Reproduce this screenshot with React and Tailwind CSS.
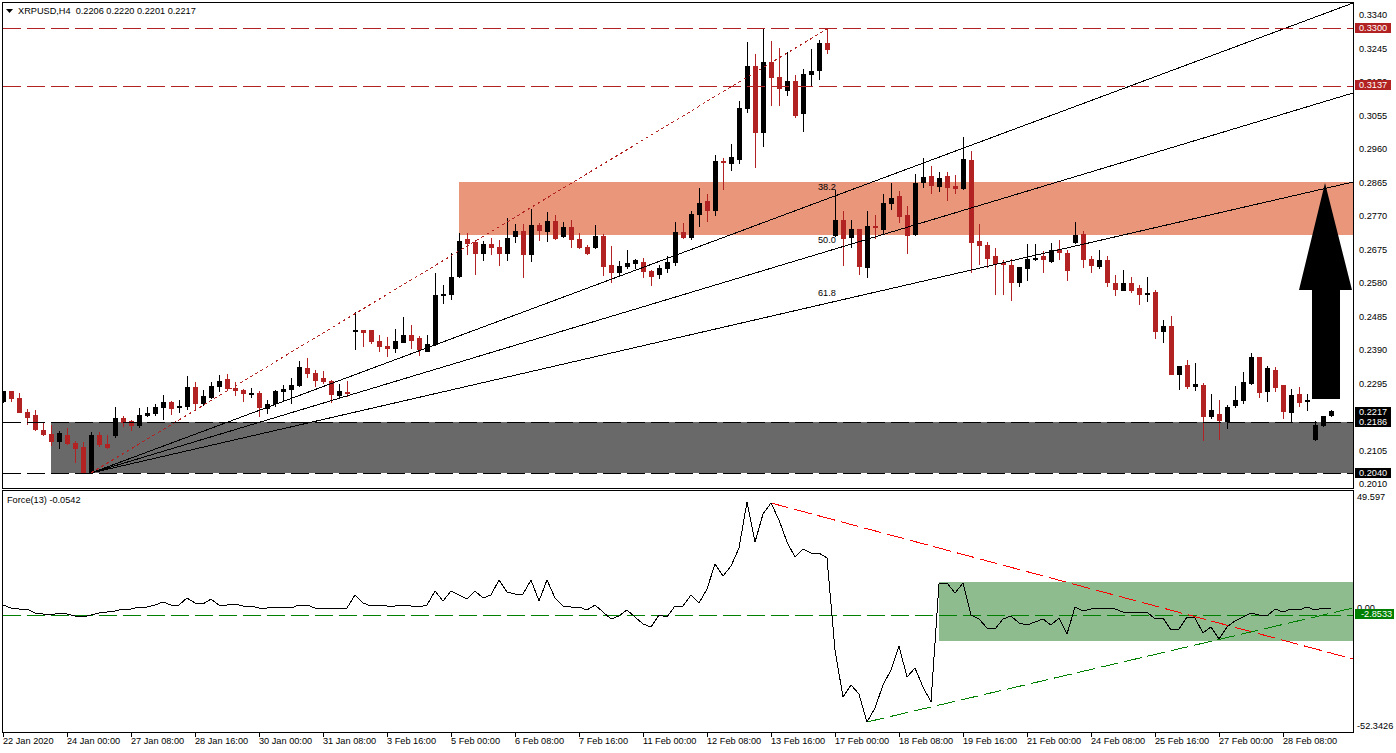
const RED = "#b22222";

// candle: colour, body top, body bottom, high, low (all in page pixels); x = 3 + 8 * index
const candles = [
  ["k",391,402,391,403],["r",391,399,391,402],["r",398,413,393,413],["r",412,418,409,425],["r",415,430,410,431],
  ["r",430,435,422,436],["r",434,442,425,446],["k",433,442,431,449],["r",435,444,428,445],["r",443,449,441,463],
  ["r",447,473,442,473],["k",435,473,432,473],["r",435,445,432,447],["r",444,448,435,449],["k",418,436,407,438],
  ["r",418,423,416,427],["r",421,426,420,431],["k",415,426,408,428],["k",413,416,407,417],["k",407,414,404,416],
  ["k",402,408,395,420],["r",402,409,401,415],["k",406,408,400,413],["k",387,407,376,410],["r",387,404,382,411],
  ["k",396,404,390,406],["k",386,398,382,399],["k",381,387,375,392],["r",379,389,374,391],["r",388,391,382,396],
  ["r",390,394,389,402],["k",393,394,388,398],["r",393,408,391,417],["k",404,409,400,414],["k",391,404,390,407],
  ["k",389,392,385,402],["k",385,390,378,404],["k",367,386,361,387],["r",368,374,358,378],["r",373,381,370,387],
  ["r",378,382,371,384],["r",381,395,380,403],["k",391,396,384,398],["r",392,393,381,397],["k",330,332,312,350],
  ["r",330,333,330,347],["r",330,342,330,344],["r",341,347,335,352],["r",346,349,337,357],["k",341,349,329,353],
  ["k",335,343,317,343],["r",335,341,325,349],["r",338,350,336,356],["k",344,352,335,352],["k",295,345,273,346],
  ["k",294,296,285,304],["k",277,295,253,300],["k",241,277,233,278],["r",239,244,233,255],["r",242,254,240,275],
  ["k",244,254,241,261],["r",244,248,238,255],["r",247,254,240,266],["k",238,254,218,261],["k",231,237,224,243],
  ["r",231,255,224,278],["k",225,255,209,262],["r",225,231,223,241],["k",221,232,212,242],["r",221,239,215,240],
  ["k",227,237,222,238],["r",227,240,220,248],["r",239,248,233,249],["r",247,254,245,255],["k",236,248,225,249],
  ["r",236,267,234,276],["r",265,273,246,283],["k",266,273,261,277],["k",263,267,250,269],["k",260,264,259,269],
  ["r",262,272,258,278],["r",271,277,270,286],["k",268,275,265,279],["k",262,269,256,273],["k",232,263,222,266],
  ["r",232,238,223,239],["k",214,238,211,240],["k",203,215,188,227],["r",201,211,194,222],["k",161,211,155,216],
  ["r",161,163,158,190],["k",157,164,144,171],["k",108,160,101,164],["k",66,109,42,113],["r",66,133,54,168],
  ["k",62,133,29,147],["r",62,78,41,106],["r",77,89,48,106],["k",81,91,52,96],["r",81,116,75,118],
  ["k",74,114,69,132],["k",71,75,49,87],["k",43,71,40,80],["r",43,50,29,54],["k",220,236,190,237],
  ["r",220,239,211,266],["k",229,238,220,248],["r",229,267,229,275],["k",226,268,211,278],["r",226,228,215,239],
  ["k",203,230,194,235],["k",198,204,183,210],["r",196,217,191,223],["r",215,236,206,254],["k",183,235,174,236],
  ["k",177,183,158,188],["r",176,186,166,194],["k",178,187,172,192],["r",176,188,172,201],["r",186,189,175,194],
  ["k",159,189,137,190],["r",160,243,151,273],["r",241,246,224,265],["r",245,259,242,268],["r",256,264,248,295],
  ["r",263,265,260,295],["r",265,283,259,301],["k",267,283,267,287],["k",259,269,244,281],["k",258,260,244,261],
  ["r",256,260,251,273],["k",250,262,243,263],["r",249,253,240,260],["r",253,271,250,281],["k",235,243,222,244],
  ["r",234,260,231,268],["r",259,266,256,273],["k",260,267,250,269],["r",260,283,256,287],["r",283,290,275,296],
  ["k",283,291,270,291],["r",283,291,277,293],["r",288,295,285,305],["k",293,295,277,302],["r",292,332,290,339],
  ["k",326,332,320,343],["r",326,375,316,375],["k",366,375,366,390],["r",365,387,360,389],["k",384,387,363,391],
  ["r",385,417,383,441],["k",410,417,394,419],["r",414,421,400,440],["k",407,422,405,429],["k",400,406,386,408],
  ["k",382,401,372,404],["k",357,384,353,385],["r",357,393,357,398],["k",368,392,366,402],["r",370,388,367,392],
  ["r",385,412,385,419],["k",395,413,389,422],["r",394,403,387,407],["k",400,402,394,411],["k",425,440,421,441],
  ["k",416,426,416,427],["k",411,416,410,417],
];

const force = [
  605,608,609,609,613,614,615,613,614,616,617,615,613,612,611,609,609,607,607,605,602,605,605,598,603,604,599,605,
  605,604,606,606,608,608,607,607,608,605,605,608,608,609,608,608,595,603,606,605,606,606,605,606,607,605,591,601,
  591,595,599,591,598,595,580,592,594,594,580,601,580,598,606,607,607,610,605,612,619,616,610,617,624,627,615,617,
  606,606,595,603,589,564,576,566,548,502,542,514,503,520,542,557,549,553,553,558,650,697,685,694,722,708,685,670,
  646,677,668,687,702,584,583,593,583,615,619,628,629,619,616,623,625,622,619,625,618,634,607,611,609,608,608,609,
  612,612,612,612,619,618,630,629,617,618,633,627,639,627,621,617,613,615,616,609,612,609,610,607,610,608,608,
];

// the 0.2200 row sits under the tags, so it stays empty
const prices = ["0.3340","0.3245","0.3150","0.3055","0.2960","0.2865","0.2770","0.2675","0.2580","0.2485","0.2390","0.2295","","0.2105","0.2010"];

const times = [
  "22 Jan 2020","24 Jan 00:00","27 Jan 08:00","28 Jan 16:00","30 Jan 00:00","31 Jan 08:00","3 Feb 16:00",
  "5 Feb 00:00","6 Feb 08:00","7 Feb 16:00","11 Feb 00:00","12 Feb 08:00","13 Feb 16:00","17 Feb 00:00",
  "18 Feb 08:00","19 Feb 16:00","21 Feb 00:00","24 Feb 08:00","25 Feb 16:00","27 Feb 00:00","28 Feb 08:00",
];

function PriceChart() {
  return (
    <svg width="1350" height="485" viewBox="3 3 1350 485" shapeRendering="crispEdges" className="block">
      {/* zones */}
      <rect x="459" y="182" width="894" height="53" fill="#e9967a" />
      <rect x="51" y="422" width="1302" height="51" fill="#696969" />

      {/* candles */}
      {candles.map(([c, top, bot, hi, lo], i) => {
        const x = 3 + 8 * i;
        const fill = c === "r" ? RED : "#000";
        return (
          <g key={i} fill={fill}>
            <rect x={x} y={hi} width="1" height={lo - hi} />
            <rect x={x - 2} y={top} width="5" height={Math.max(bot - top, 2)} />
          </g>
        );
      })}

      {/* fibo fan */}
      <g stroke="#000" fill="none">
        <line x1="91" y1="473" x2="1353" y2="3" />
        <line x1="91" y1="473" x2="1353" y2="93" />
        <line x1="91" y1="473" x2="1353" y2="182" />
      </g>
      <line x1="91" y1="473" x2="827" y2="29" stroke={RED} strokeDasharray="3 3" />

      {/* levels */}
      <line x1="3" y1="28.5" x2="1353" y2="28.5" stroke={RED} strokeDasharray="18 6" />
      <line x1="3" y1="86.5" x2="1353" y2="86.5" stroke={RED} strokeDasharray="18 6" />
      <line x1="3" y1="422.5" x2="1353" y2="422.5" stroke="#000" strokeDasharray="18 6" />
      <line x1="3" y1="473.5" x2="1353" y2="473.5" stroke="#000" strokeDasharray="18 6" />

      <g fontSize="9.2" fill="#000" shapeRendering="auto">
        <text x="818" y="190">38.2</text>
        <text x="818" y="243">50.0</text>
        <text x="818" y="296">61.8</text>
      </g>

      {/* arrow */}
      <polygon points="1325,183 1352,290 1340,290 1340,399 1312,399 1312,290 1299,290" fill="#000" shapeRendering="auto" />
    </svg>
  );
}

function ForceChart() {
  const line = force.map((y, i) => `${3 + 8 * i},${y}`).join(" ");
  return (
    <svg width="1350" height="241" viewBox="3 491 1350 241" shapeRendering="crispEdges" className="block">
      <rect x="939" y="582" width="414" height="59" fill="#8fbc8f" />
      <line x1="3" y1="615.5" x2="1353" y2="615.5" stroke="#008000" strokeDasharray="18 6" />
      <line x1="771" y1="503" x2="1353" y2="659" stroke="#ff0000" strokeDasharray="18 6" />
      <line x1="867" y1="722" x2="1353" y2="608" stroke="#008000" strokeDasharray="18 6" />
      <polyline points={line} fill="none" stroke="#000" />
    </svg>
  );
}

function Tag({ top, bg, children, wide }) {
  return (
    <div className={`absolute left-px flex items-center h-[10px] text-white ${wide ? "w-[39px] pl-[6px]" : "w-[36px] pl-[4px]"} ${bg}`} style={{ top }}>
      {children}
    </div>
  );
}

export default function App() {
  return (
    <div className="w-[1396px] h-[753px] bg-white text-black overflow-hidden pl-[2px] pt-[2px] flex flex-col font-['Liberation_Sans',sans-serif] text-[9.2px] leading-[12px]">
      {/* main pane */}
      <div className="flex h-[487px]">
        <div className="relative w-[1351px] border-t border-l border-b border-black">
          <PriceChart />
          <div className="absolute left-[3px] top-[2px] flex items-center">
            <svg width="7" height="4" viewBox="0 0 7 4" className="mr-[5px]">
              <polygon points="0,0 7,0 3.5,4" fill="#000" />
            </svg>
            <span className="whitespace-pre">XRPUSD,H4  0.2206 0.2220 0.2201 0.2217</span>
          </div>
        </div>
        <div className="relative w-[41px] border-l border-black pt-[7px] pl-[5px]">
          {prices.map((p, i) => (
            <div key={i} className="h-[33.52px]">{p}</div>
          ))}
          <Tag top={21} bg="bg-[#b22222]">0.3300</Tag>
          <Tag top={78} bg="bg-[#b22222]">0.3137</Tag>
          <Tag top={405} bg="bg-black">0.2217</Tag>
          <Tag top={415} bg="bg-black">0.2186</Tag>
          <Tag top={466} bg="bg-black">0.2040</Tag>
        </div>
      </div>

      {/* force pane */}
      <div className="flex h-[243px] mt-[1px]">
        <div className="relative w-[1351px] border-t border-l border-b border-black">
          <ForceChart />
          <div className="absolute left-[4px] top-[3px]">Force(13) -0.0542</div>
        </div>
        <div className="relative w-[41px] border-l border-black pl-[3px] pt-px flex flex-col">
          <div>49.597</div>
          <div className="mt-[99px]">0.00</div>
          <div className="mt-[106px] whitespace-nowrap">-52.3426</div>
          <Tag top={119} bg="bg-[#008000]" wide>-2.8533</Tag>
        </div>
      </div>

      {/* time axis */}
      <div className="flex pl-px">
        {times.map((t) => (
          <div key={t} className="w-[64px] shrink-0">
            <div className="w-px h-[4px] bg-black" />
            <div className="-mt-[2px] whitespace-nowrap">{t}</div>
          </div>
        ))}
      </div>
    </div>
  );
}
